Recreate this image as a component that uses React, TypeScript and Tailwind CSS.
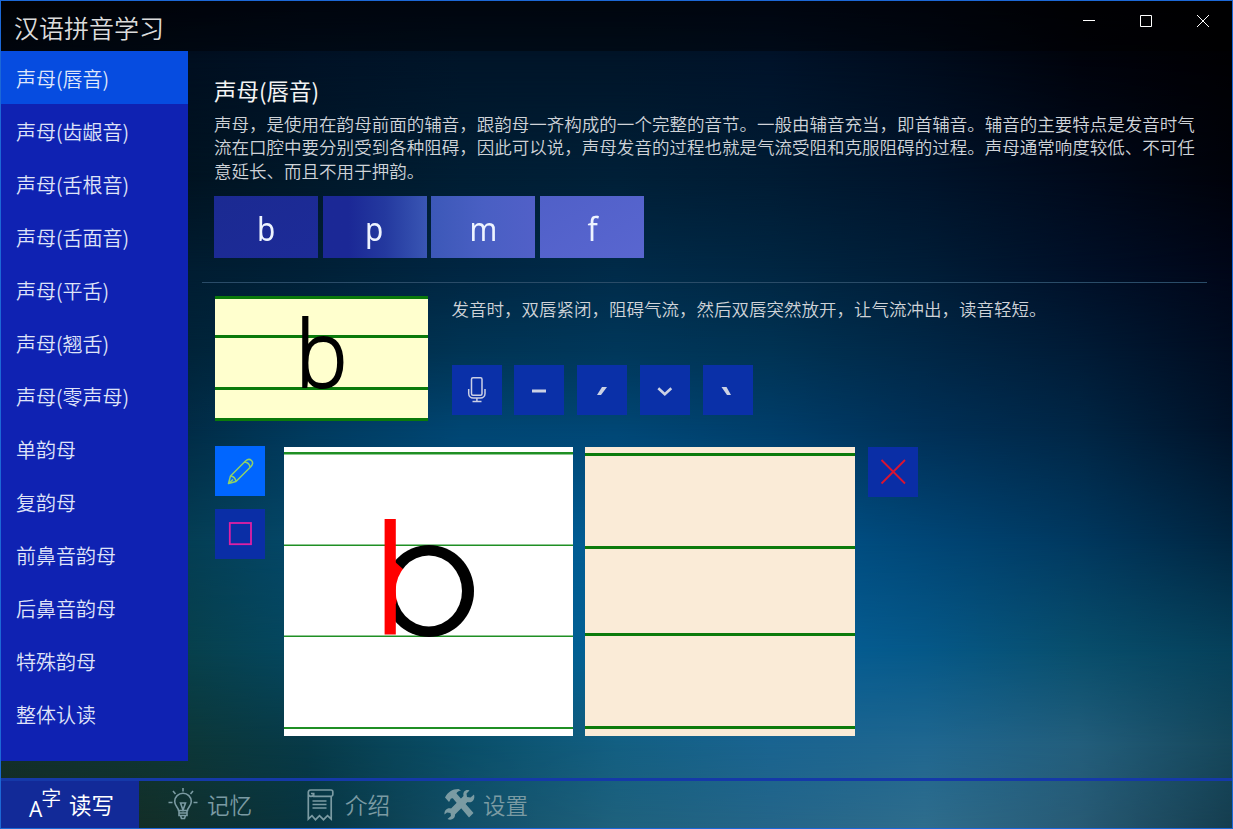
import React from "react";

type RowStop = { y: number; colors: string[] };

// Glow background: colour samples on a coarse grid, blended in both directions.
const GLOW: RowStop[] = [
  { y: 0, colors: ["#000308", "#000510", "#000816", "#000918", "#000a18", "#00091a", "#000612", "#000206", "#000002"] },
  { y: 60, colors: ["#000a18", "#000e1e", "#001226", "#001529", "#001529", "#00132a", "#000c1d", "#00030c", "#000003"] },
  { y: 180, colors: ["#00101c", "#00121f", "#00182a", "#001e34", "#002038", "#001c34", "#00142b", "#000a1c", "#00020a"] },
  { y: 270, colors: ["#001a28", "#001c30", "#002037", "#002642", "#002b49", "#002642", "#001d37", "#001028", "#000618"] },
  { y: 350, colors: ["#001c2a", "#002236", "#002a44", "#003454", "#00375a", "#003354", "#002746", "#001b36", "#000c20"] },
  { y: 430, colors: ["#00202e", "#012840", "#003a5e", "#004673", "#004775", "#003e6a", "#003057", "#002645", "#001228"] },
  { y: 540, colors: ["#04303c", "#043b4e", "#04486a", "#005488", "#005e96", "#00548b", "#004676", "#00385f", "#002540"] },
  { y: 650, colors: ["#0b3236", "#083e46", "#044862", "#045680", "#00639a", "#05609a", "#055888", "#084e6c", "#05405a"] },
  { y: 745, colors: ["#12302c", "#0e3634", "#073a48", "#094e68", "#135f82", "#1a6490", "#206790", "#235e7c", "#15465a"] },
  { y: 829, colors: ["#16291e", "#132e28", "#073440", "#134e66", "#1f617c", "#256588", "#2f6d8c", "#285a74", "#153d4e"] },
];

const SIDE = [
  "声母(唇音)", "声母(齿龈音)", "声母(舌根音)", "声母(舌面音)", "声母(平舌)", "声母(翘舌)", "声母(零声母)",
  "单韵母", "复韵母", "前鼻音韵母", "后鼻音韵母", "特殊韵母", "整体认读",
];

function Glow() {
  return (
    <div className="absolute inset-0 overflow-hidden">
      {GLOW.map((row, i) => {
        const prev = i ? GLOW[i - 1].y : 0;
        const mask = i ? `linear-gradient(to bottom, transparent ${prev}px, #000 ${row.y}px)` : undefined;
        return (
          <div
            key={row.y}
            className="absolute inset-0"
            style={{ background: `linear-gradient(to right, ${row.colors.join(",")})`, maskImage: mask, WebkitMaskImage: mask }}
          />
        );
      })}
    </div>
  );
}

function TitleBar() {
  return (
    <header className="flex h-[50px] shrink-0 items-start justify-between bg-black/40">
      <h1 className="pt-[8px] pl-[13px] text-[25px] leading-[36px] font-[350] text-[#dcdcdc]">汉语拼音学习</h1>
      <div className="flex pt-[13px] pr-[22px]">
        <svg width="128" height="14" viewBox="0 0 128 14" fill="none" stroke="#fff" strokeWidth="1">
          <path d="M1 6.500h12M58.500 1.500h11v11h-11zM115 1l12 12M127 1l-12 12" />
        </svg>
      </div>
    </header>
  );
}

function Sidebar() {
  return (
    <nav className="h-[710px] w-[187px] shrink-0 bg-[#0f22b2]">
      {SIDE.map((label, i) => (
        <div
          key={label}
          className={
            i === 0
              ? "flex h-[53px] items-center bg-[#064ce0] pl-[15px] text-xl font-[350] text-[#dfe6fa]"
              : "flex h-[53px] items-center pl-[15px] text-xl font-[350] text-[#dfe3f8]"
          }
        >
          <span className="mt-[3px]">{label}</span>
        </div>
      ))}
    </nav>
  );
}

function LetterTiles() {
  const tile = "flex h-[62px] w-[104px] items-center justify-center text-[33px] font-normal text-[#eef4ff]";
  return (
    <div className="flex gap-[4.600px] font-['Noto_Sans',sans-serif]">
      <div className={`${tile} bg-linear-to-br from-[#1b2a92] to-[#1d2b98]`}><span className="mt-[3px] scale-x-90">b</span></div>
      <div className={`${tile} bg-linear-to-r from-[#1b2896] from-25% via-[#24399f] via-60% to-[#3a56b4]`}><span className="mt-[3px] scale-x-90">p</span></div>
      <div className={`${tile} bg-linear-to-r from-[#3c58b8] via-[#495fc3] to-[#5160c8]`}><span className="mt-[3px] scale-x-90">m</span></div>
      <div className={`${tile} bg-linear-to-br from-[#5060c8] to-[#5966d0]`}><span className="mt-[3px] ml-px scale-x-90">f</span></div>
    </div>
  );
}

function ToneButtons() {
  const b = "flex size-[50px] items-center justify-center bg-[#0a30a8]";
  return (
    <div className="flex gap-[12.750px]">
      <button className={b}>
        <svg width="50" height="50" viewBox="0 0 50 50" fill="none" stroke="#cbd0e6" strokeWidth="1.500">
          <rect x="19.500" y="12.800" width="10.500" height="17.400" rx="1.500" />
          <path d="M16.700 24v4.500a4.500 4.500 0 0 0 4.500 4.500h7.300a4.500 4.500 0 0 0 4.500-4.500V24M24.900 33v3.500M20.500 36.600h9" />
        </svg>
      </button>
      <button className={b}>
        <svg width="50" height="50" viewBox="0 0 50 50" fill="#ccd2e4"><path d="M18 24.500h14v3h-14z" /></svg>
      </button>
      <button className={b}>
        <svg width="50" height="50" viewBox="0 0 50 50" fill="#ccd2e4"><path d="M25 22h5l-6 8h-4z" /></svg>
      </button>
      <button className={b}>
        <svg width="50" height="50" viewBox="0 0 50 50" fill="none" stroke="#ccd2e4" strokeWidth="2.600"><path d="M18.300 23.300l6.500 6 6.500-6" /></svg>
      </button>
      <button className={b}>
        <svg width="50" height="50" viewBox="0 0 50 50" fill="#ccd2e4"><path d="M18.500 22h5l4.500 8h-4z" /></svg>
      </button>
    </div>
  );
}

function PreviewCard() {
  return (
    <div className="relative h-[125px] w-[213px] bg-[#ffffce]">
      <svg className="absolute inset-0" width="213" height="125" fill="#0b7a0b">
        <rect width="213" height="3" />
        <rect y="39" width="213" height="3" />
        <rect y="91" width="213" height="3" />
        <rect y="122" width="213" height="3" />
      </svg>
      <div className="absolute inset-x-0 -top-[3px] scale-x-95 text-center font-['Open_Sans','Noto_Sans',sans-serif] text-[92px] leading-[118px] font-light text-black [-webkit-text-stroke:2px_#000]">b</div>
    </div>
  );
}

function StrokeOrder() {
  return (
    <svg className="bg-white" width="289" height="289" viewBox="284 447 289 289">
      <g fill="#1f8f24">
        <rect x="284" y="452" width="289" height="2.500" />
        <rect x="284" y="544.500" width="289" height="1.500" />
        <rect x="284" y="635.500" width="289" height="1.500" />
        <rect x="284" y="727" width="289" height="2" />
      </g>
      <clipPath id="bowl"><rect x="394" y="540" width="90" height="100" /></clipPath>
      <g clipPath="url(#bowl)">
        <ellipse cx="429" cy="591" rx="45" ry="46" fill="#000" />
        <path d="M394 561l9.500 8.500L396 604h-2z" fill="#f00" />
        <ellipse cx="428.800" cy="591" rx="33.200" ry="35.500" fill="#fff" />
      </g>
      <rect x="384.600" y="519" width="11.200" height="115.500" fill="#f00" />
    </svg>
  );
}

function PracticePad() {
  return (
    <svg className="ml-3 bg-[#faebd7]" width="270" height="289" fill="#0b7a0b">
      <rect y="6" width="270" height="3" />
      <rect y="99" width="270" height="3" />
      <rect y="186" width="270" height="3" />
      <rect y="279" width="270" height="3" />
    </svg>
  );
}

function Content() {
  return (
    <main className="flex flex-1 flex-col pr-[25px] pl-[14px]">
      <section className="flex h-[232px] flex-col border-b border-[#2a4c68] pl-3">
        <h2 className="mt-[23px] text-[22.500px] leading-[32px] font-normal text-[#f4f4f4]">声母(唇音)</h2>
        <p className="mt-[6px] -mr-2 h-[84px] text-[17.520px] leading-[23.400px] font-[350] text-[#cfd3d8]">
          声母，是使用在韵母前面的辅音，跟韵母一齐构成的一个完整的音节。一般由辅音充当，即首辅音。辅音的主要特点是发音时气
          <br />
          流在口腔中要分别受到各种阻碍，因此可以说，声母发音的过程也就是气流受阻和克服阻碍的过程。声母通常响度较低、不可任
          <br />
          意延长、而且不用于押韵。
        </p>
        <LetterTiles />
      </section>
      <section className="flex pt-[13px] pl-[13px]">
        <PreviewCard />
        <div className="ml-[23.500px]">
          <p className="-mt-px h-[70px] text-[17.500px] leading-[27px] font-[350] text-[#cfd3d8]">
            发音时，双唇紧闭，阻碍气流，然后双唇突然放开，让气流冲出，读音轻短。
          </p>
          <ToneButtons />
        </div>
      </section>
      <section className="flex items-start pt-[26px] pl-[13px]">
        <div className="-mt-px flex w-[69px] flex-col gap-[13px]">
          <button className="size-[50px] bg-[#0066ff]">
            <svg width="50" height="50" viewBox="0 0 50 50" fill="none" stroke="#8fd16a" strokeWidth="1.500" strokeLinejoin="round">
              <path d="M13.500 37.500l2-7.500 15-15c4.500-4 9.500 1 5.500 5.500l-15 15zM15.500 30c3 .3 5 2.500 5.500 5.500M29.500 16c3.200.3 5.200 2.300 5.500 5.500M13.500 37.500l4.500-4" />
            </svg>
          </button>
          <button className="size-[50px] bg-[#0a2ea6]">
            <svg width="50" height="50" viewBox="0 0 50 50" fill="none" stroke="#de20a4" strokeWidth="1.800"><rect x="14.800" y="14" width="21.200" height="21.200" /></svg>
          </button>
        </div>
        <StrokeOrder />
        <PracticePad />
        <button className="ml-[13px] size-[50px] bg-[#0a2ea6]">
          <svg width="50" height="50" viewBox="0 0 50 50" fill="none" stroke="#dc1430" strokeWidth="1.800"><path d="M13.500 13l23.500 23.500M37 13L13.500 36.500" /></svg>
        </button>
      </section>
    </main>
  );
}

function BottomNav() {
  const item = "flex w-[138px] items-center pl-[28px] text-[22.500px] font-[350] text-[#7b9ba3]";
  return (
    <footer className="flex h-[50px] shrink-0 border-t-[3px] border-[#1539a8]">
      <div className="flex w-[138px] items-center bg-[#122a98] text-white">
        <div className="flex w-[68px] pl-[28px] leading-none">
          <span className="mt-[9px] font-['Open_Sans',sans-serif] text-[21px] leading-[20px]">A</span>
          <span className="-mt-[2px] -ml-px text-[20px] leading-[20px] font-[350]">字</span>
        </div>
        <span className="mt-px text-[22.500px] font-normal">读写</span>
      </div>
      <div className={item}>
        <svg className="-mt-px" width="32" height="34" viewBox="0 0 32 34" fill="none" stroke="currentColor" strokeWidth="1.600">
          <path d="M11.500 23.500c0-3-3.800-4.500-3.800-9a8.300 8.300 0 0 1 16.600 0c0 4.500-3.800 6-3.800 9zM12 23.500v5h8v-5M12 26h8M13.500 28.500l1 3h3l1-3M13.500 16l2.500 7 2.500-7zM16 1v3.500M6 4l2.500 3M26 4l-2.500 3M1.500 15.500h4M30.500 15.500h-4" />
        </svg>
        <span className="ml-[8px]">记忆</span>
      </div>
      <div className={item}>
        <svg width="30" height="34" viewBox="0 0 30 34" fill="none" stroke="currentColor" strokeWidth="1.700">
          <path d="M3.300 6v25l3.700-3.300 3.500 4 4-4 4 4 4-4 3.700 3.300V8.300M5.500 2h20.500a1.800 1.800 0 0 1 1.800 1.800v2.700a1.800 1.800 0 0 1-1.800 1.800H8.700V5.500H6M5.500 2a2.500 2.500 0 0 0-2.200 2.500v1.300a2.600 2.600 0 0 0 5.300 0M7.500 13h14M7.500 16.500h14M7.500 20h14" />
        </svg>
        <span className="ml-[10px]">介绍</span>
      </div>
      <div className={item}>
        <svg className="-mt-px" width="34" height="34" viewBox="-1 0 34 34" fill="currentColor">
          <path d="M1 10.500C4 5 8 2 14.500 2L17 3.500c-3 .5-4 1.500-4.500 3L29.500 26l-4.500 4.500L9 11.500c-1.500-.5-2.500.2-3 2L5 15z" />
          <path d="M25.500 3.500l-3 3 .5 3.500 3.500.500 3.500-3c1.500 5-2 9-6.500 7.500L11 27.500c.5 4-4 6.500-7.500 4.500l3.500-3-.5-3-3.500-.500-2.500 2c-.5-4.500 3-7 6.500-6L19.500 9c-1-4.500 2.500-7 6-5.500z" />
        </svg>
        <span className="ml-[6px]">设置</span>
      </div>
    </footer>
  );
}

export default function App() {
  return (
    <div className="relative h-[829px] w-[1233px] overflow-hidden bg-black font-['Noto_Sans_CJK_SC',sans-serif]">
      <Glow />
      <div className="relative flex h-full flex-col border border-[#1c68d6]">
        <TitleBar />
        <div className="flex flex-1">
          <Sidebar />
          <Content />
        </div>
        <BottomNav />
      </div>
    </div>
  );
}
